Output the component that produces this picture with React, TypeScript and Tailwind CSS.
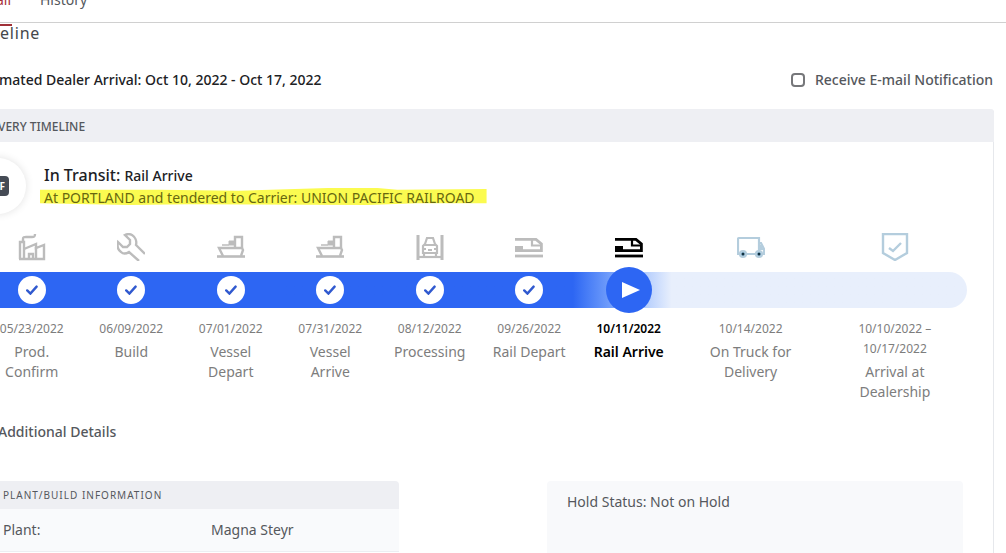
import { useState, type ReactNode } from "react";

type Step = {
  id: string;
  dates: string[];
  name: string[];
  icon: ReactNode;
  status: "done" | "current" | "upcoming";
};

const COLS = "grid grid-cols-[repeat(7,minmax(0,1fr))_repeat(2,minmax(0,1.45fr))]";

function FactoryIcon() {
  return (
    <svg viewBox="0 0 28 28" className="size-7" fill="none" stroke="currentColor" strokeWidth="2.4">
      <path d="M2 26V9h4v17" />
      <path d="M1 26h25V12l-8 3v-4L6 16" />
      <path d="M18 14v11" />
      <path d="M5 9V6c0-2 1-2 3-2h6c2 0 3 0 3-3" />
      <path d="M11 26v-5h4v5" />
    </svg>
  );
}

function WrenchIcon() {
  return (
    <svg viewBox="0 0 28 28" className="size-7" fill="none" stroke="currentColor" strokeWidth="2.4">
      <path d="M28 21l-9-9c1-4-1-8-4-10-2-1-5-1-7 0l5 5v4l-3 3H6L1 9c-1 4 0 8 3 10 2 2 5 2 8 0l10 9" />
    </svg>
  );
}

function VesselIcon() {
  return (
    <svg viewBox="0 0 28 28" className="size-7" fill="none" stroke="currentColor" strokeWidth="2.4">
      <path d="M0 23.5h28" strokeWidth="2.6" />
      <path d="M6 23l-4-8h23l1 2-2 6" />
      <path d="M18 14V4h7v11" />
      <path d="M5 12h7V8h6v4H5z" fill="currentColor" strokeWidth="1" />
    </svg>
  );
}

function ProcessingIcon() {
  return (
    <svg viewBox="0 0 28 28" className="size-7" fill="none" stroke="currentColor" strokeWidth="2.2">
      <path d="M2 2v25M26 2v25" strokeWidth="3" />
      <path d="M2 24h24" />
      <path d="M7 20v-7l2-2 2-6h6l2 6 2 2v7H7zM8 12h12" />
      <path d="M7 16h3M18 16h3M12 17h4M8 20v3M20 20v3" />
    </svg>
  );
}

function RailIcon() {
  return (
    <svg viewBox="0 0 28 28" className="size-7" fill="none" stroke="currentColor" strokeWidth="2.8">
      <path d="M0 23h28" />
      <path d="M0 6.4h21l5.4 4.4v6.8H0" />
      <path d="M17 7v5.5h9" strokeWidth="2.2" />
      <path d="M0 13h8v4H0z" fill="currentColor" stroke="none" />
    </svg>
  );
}

function TruckIcon() {
  return (
    <svg viewBox="0 0 28 28" className="size-7" fill="none" stroke="#b4cddd" strokeWidth="2.2">
      <path d="M3 21H1V6c0-1 0-1 1-1h20v16H9" />
      <path d="M22 10h2l3 6v5h-1" />
      <path d="M23 12l2 4h-2z" />
      <circle cx="6" cy="21" r="3" fill="#9fcdec" />
      <circle cx="22" cy="21" r="3" fill="#9fcdec" />
      <circle cx="6" cy="21" r="1.5" fill="#12303f" stroke="none" />
      <circle cx="22" cy="21" r="1.5" fill="#12303f" stroke="none" />
    </svg>
  );
}

function ShieldIcon() {
  return (
    <svg viewBox="0 0 28 28" className="size-7" fill="none" stroke="#b4cddd" strokeWidth="2.4">
      <path d="M2 1h24v19l-12 7-12-7z" />
      <path d="M8 15l4 3 8-8" />
    </svg>
  );
}

const steps: Step[] = [
  { id: "confirm", dates: ["05/23/2022"], name: ["Prod.", "Confirm"], icon: <FactoryIcon />, status: "done" },
  { id: "build", dates: ["06/09/2022"], name: ["Build"], icon: <WrenchIcon />, status: "done" },
  { id: "vessel-depart", dates: ["07/01/2022"], name: ["Vessel", "Depart"], icon: <VesselIcon />, status: "done" },
  { id: "vessel-arrive", dates: ["07/31/2022"], name: ["Vessel", "Arrive"], icon: <VesselIcon />, status: "done" },
  { id: "processing", dates: ["08/12/2022"], name: ["Processing"], icon: <ProcessingIcon />, status: "done" },
  { id: "rail-depart", dates: ["09/26/2022"], name: ["Rail Depart"], icon: <RailIcon />, status: "done" },
  { id: "rail-arrive", dates: ["10/11/2022"], name: ["Rail Arrive"], icon: <RailIcon />, status: "current" },
  { id: "truck", dates: ["10/14/2022"], name: ["On Truck for", "Delivery"], icon: <TruckIcon />, status: "upcoming" },
  { id: "dealer", dates: ["10/10/2022 –", "10/17/2022"], name: ["Arrival at", "Dealership"], icon: <ShieldIcon />, status: "upcoming" },
];

function StepMarker({ status }: { status: Step["status"] }) {
  if (status === "done") {
    return (
      <span className="flex size-7 items-center justify-center rounded-full bg-white">
        <svg viewBox="0 0 12 10" className="h-[10px] w-3" fill="none" stroke="#3059cf" strokeWidth="2.4" strokeLinecap="round">
          <path d="M1.2 5.4l3.2 3.2 6.2-7" />
        </svg>
      </span>
    );
  }
  if (status === "current") {
    return (
      <span className="flex size-[46px] shrink-0 items-center justify-center rounded-full bg-[#2d66f3]">
        <svg viewBox="0 0 18 16" className="ml-1 h-4 w-[18px]" fill="white">
          <path d="M0 0l18 8-18 8z" />
        </svg>
      </span>
    );
  }
  return null;
}

function Timeline() {
  return (
    <div className="-ml-[18px] mr-[26px]">
      <div className={COLS}>
        {steps.map((step) => (
          <div
            key={step.id}
            className={`flex justify-center ${step.status === "current" ? "text-black" : "text-[#bcbcbc]"}`}
          >
            {step.icon}
          </div>
        ))}
      </div>
      <div
        className={`${COLS} mt-[11px] grid-rows-[36px] rounded-r-full bg-linear-to-r from-[#2d66f3] from-60% to-[#e8effc] to-70%`}
      >
        {steps.map((step) => (
          <div key={step.id} className="flex h-9 items-center justify-center">
            <StepMarker status={step.status} />
          </div>
        ))}
      </div>
      <div className={`${COLS} mt-[11px] text-center leading-5`}>
        {steps.map((step) => (
          <div
            key={step.id}
            className={step.status === "current" ? "font-semibold text-black" : "text-[#7d7d7d]"}
          >
            <div className="text-[12px]">
              {step.dates.map((date) => (
                <div key={date}>{date}</div>
              ))}
            </div>
            <div className="mt-[3px] text-[14px]">
              {step.name.map((line) => (
                <div key={line}>{line}</div>
              ))}
            </div>
          </div>
        ))}
      </div>
    </div>
  );
}

export default function App() {
  const [notify, setNotify] = useState(false);

  return (
    <div className="h-screen overflow-hidden bg-white font-['Noto_Sans',sans-serif] text-[#55585d]">
      <nav className="-mt-[10px] flex h-[33px] gap-7 border-b border-[#d0d0d0] text-[14px] leading-5">
        <a href="#detail" className="h-9 w-3 border-b-2 border-[#a03038] text-[#a8323a]">
          <span className="-ml-1 block">ail</span>
        </a>
        <a href="#history">History</a>
      </nav>

      <h1 className="text-[16px] leading-5 tracking-wider text-[#44474b]">eline</h1>

      <div className="mt-[27px] mr-[13px] flex items-center justify-between text-[14px] leading-5">
        <p className="-ml-px font-medium text-[#202124]">mated Dealer Arrival: Oct 10, 2022 - Oct 17, 2022</p>
        <label className="flex items-center gap-[10px] font-medium">
          <input
            type="checkbox"
            checked={notify}
            onChange={(e) => setNotify(e.target.checked)}
            className="size-[14px] appearance-none rounded border-2 border-[#76777a] bg-white checked:bg-[#2d66f3]"
          />
          Receive E-mail Notification
        </label>
      </div>

      <section className="mt-[19px] mr-3 min-h-screen rounded-tr border-r border-[#e6e8ec]">
        <h2 className="-mr-px rounded-tr bg-[#eeeff3] pt-2 pb-[5px] text-[12px] font-medium leading-5">
          <span className="-ml-[2px]">VERY TIMELINE</span>
        </h2>

        <div className="flex items-center pt-4">
          <div className="-ml-[30px] flex size-14 shrink-0 items-center justify-end rounded-full bg-white pr-[17px] shadow-[0_0_8px_rgba(0,0,0,0.12)]">
            <span className="flex h-5 w-6 items-center justify-end rounded bg-[#454b55] pr-1 text-[10px] font-bold text-white">
              F
            </span>
          </div>
          <div className="ml-[18px] leading-[22px]">
            <p className="font-medium text-[#202124]">
              <span className="text-[16px]">In Transit:</span> <span className="text-[14px]">Rail Arrive</span>
            </p>
            <p className="relative isolate pr-2 text-[14px] text-[#67670f]">
              <svg
                viewBox="0 0 450 20"
                preserveAspectRatio="none"
                className="absolute -inset-x-1 top-px -z-10 h-[18px] w-[calc(100%+8px)]"
                fill="#fbfb50"
              >
                <path d="M0 2L120 2 200 3 290 0 340 0 360 2 450 1 450 17 380 17 330 19 150 18 90 19 0 17z" />
              </svg>
              At PORTLAND and tendered to Carrier: UNION PACIFIC RAILROAD
            </p>
          </div>
        </div>

        <div className="mt-[19px]">
          <Timeline />
        </div>

        <h3 className="mt-5 -ml-[2px] text-[14px] font-medium leading-5">Additional Details</h3>

        <div className="mt-[39px] mr-[30px] -ml-[17px] grid grid-cols-2 gap-[148px] text-[14px] leading-5">
          <div>
            <h4 className="rounded-tr bg-[#eeeff3] px-5 py-1 text-[10px] leading-5 tracking-widest">
              PLANT/BUILD INFORMATION
            </h4>
            <table className="w-full table-fixed bg-[#f9fafc] text-left">
              <tbody>
                <tr className="border-b border-[#eceef2]">
                  <th scope="row" className="px-5 py-[11px] font-normal">
                    Plant:
                  </th>
                  <td className="px-5 py-[11px]">Magna Steyr</td>
                </tr>
              </tbody>
            </table>
          </div>
          <div className="min-h-40 rounded bg-[#f8f9fb] px-5 py-[11px]">Hold Status: Not on Hold</div>
        </div>
      </section>
    </div>
  );
}
